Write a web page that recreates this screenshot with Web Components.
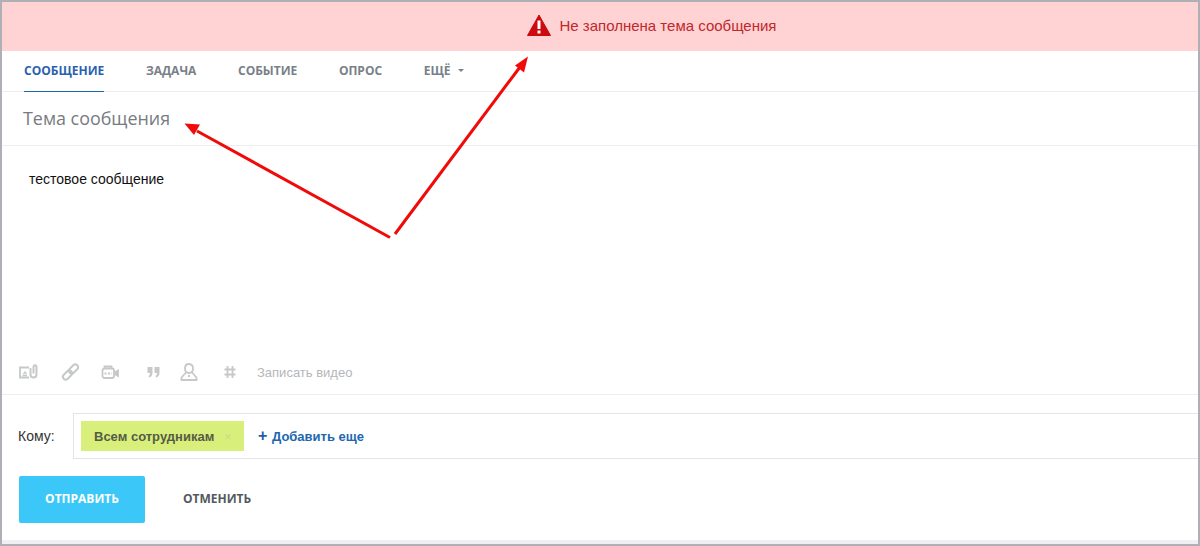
<!DOCTYPE html>
<html lang="ru">
<head>
<meta charset="utf-8">
<title>Сообщение</title>
<style>
  html, body { margin: 0; height: 100%; background: #fff; }
  body { font-family: "Liberation Sans", Arial, sans-serif; overflow: hidden; }
</style>
</head>
<body>
<post-form>
  <alert-banner>Не заполнена тема сообщения</alert-banner>
  <tab-bar></tab-bar>
  <subject-line>Тема сообщения</subject-line>
  <message-body>тестовое сообщение</message-body>
  <editor-tools></editor-tools>
  <recipient-row></recipient-row>
  <form-actions></form-actions>
</post-form>

<script>
class PostForm extends HTMLElement {
  constructor() {
    super();
    this.attachShadow({ mode: 'open' });
    this.shadowRoot.innerHTML = `
      <style>
        :host {
          display: flex;
          flex-direction: column;
          position: relative;
          box-sizing: border-box;
          width: 1200px;
          height: 546px;
          border: 2px solid #aeb0b5;
          background: #fff;
          overflow: hidden;
        }
        .strip {
          margin-top: auto;
          height: 4px;
          background: #eef0f3;
        }
        svg {
          position: absolute;
          left: -2px;
          top: -2px;
          pointer-events: none;
        }
      </style>
      <slot></slot>
      <div class="strip"></div>
      <svg width="1200" height="546" viewBox="0 0 1200 546" fill="#f00a0a">
        <path d="M390 237.500L197 131" stroke="#f00a0a" stroke-width="3" fill="none"/>
        <path d="M184.500 123.500L200 124.500L194 135Z"/>
        <path d="M395 234L520 67" stroke="#f00a0a" stroke-width="3" fill="none"/>
        <path d="M528 56.500L524 72.500L515 65.500Z"/>
      </svg>
    `;
  }
}

class AlertBanner extends HTMLElement {
  constructor() {
    super();
    this.attachShadow({ mode: 'open' });
    this.shadowRoot.innerHTML = `
      <style>
        :host {
          display: flex;
          align-items: center;
          justify-content: center;
          gap: 9px;
          height: 49px;
          flex: none;
          box-sizing: border-box;
          padding: 0 0 2px 103px;
          background: #ffd2d3;
          color: #c0282c;
          font: 15px "Liberation Sans", Arial, sans-serif;
        }
        svg { display: block; margin-top: -1px; }
      </style>
      <svg width="24" height="22" viewBox="0 0 24 22">
        <path d="M12 1L23.500 21.500H.5Z" fill="#cc0a0f" stroke="#cc0a0f" stroke-linejoin="round"/>
        <rect x="10.500" y="6.500" width="3" height="8.500" fill="#fff"/>
        <rect x="10.500" y="16.500" width="3" height="3" fill="#fff"/>
      </svg>
      <span><slot></slot></span>
    `;
  }
}

class TabBar extends HTMLElement {
  constructor() {
    super();
    this.attachShadow({ mode: 'open' });
    const tabs = ['Сообщение', 'Задача', 'Событие', 'Опрос'];
    this.shadowRoot.innerHTML = `
      <style>
        :host {
          display: flex;
          flex: none;
          gap: 41.600px;
          height: 41px;
          box-sizing: border-box;
          padding-left: 22px;
          border-bottom: 1px solid #edeef0;
          font: 700 12px "Open Sans", sans-serif;
          color: #7a8088;
          text-transform: uppercase;
        }
        div {
          display: flex;
          align-items: center;
          height: 41px;
          box-sizing: border-box;
          padding-bottom: 2px;
        }
        .active {
          color: #2b5fb0;
          border-bottom: 1px solid #2067b0;
        }
        .caret {
          width: 0;
          height: 0;
          margin-left: 7px;
          border: 3px solid transparent;
          border-top: 3px solid #7a8088;
          border-bottom: 0;
        }
      </style>
      ${tabs.map((t, i) => `<div class="${i === 0 ? 'active' : ''}">${t}</div>`).join('')}
      <div>Ещё<span class="caret"></span></div>
    `;
  }
}

class SubjectLine extends HTMLElement {
  constructor() {
    super();
    this.attachShadow({ mode: 'open' });
    this.shadowRoot.innerHTML = `
      <style>
        :host {
          display: flex;
          align-items: center;
          flex: none;
          height: 54px;
          box-sizing: border-box;
          padding: 0 0 2px 21px;
          border-bottom: 1px solid #edeef0;
          font: 17.900px "Open Sans", sans-serif;
          color: #767b80;
        }
      </style>
      <slot></slot>
    `;
  }
}

class MessageBody extends HTMLElement {
  constructor() {
    super();
    this.attachShadow({ mode: 'open' });
    this.shadowRoot.innerHTML = `
      <style>
        :host {
          display: block;
          flex: none;
          height: 205px;
          box-sizing: border-box;
          padding: 25px 0 0 27px;
          font: 14px/16px "Liberation Sans", Arial, sans-serif;
          color: #111;
        }
      </style>
      <slot></slot>
    `;
  }
}

class EditorTools extends HTMLElement {
  constructor() {
    super();
    this.attachShadow({ mode: 'open' });
    this.shadowRoot.innerHTML = `
      <style>
        :host {
          display: flex;
          align-items: center;
          flex: none;
          height: 44px;
          box-sizing: border-box;
          padding: 0 0 1px 17px;
          border-bottom: 1px solid #edeef0;
          font: 13px "Liberation Sans", Arial, sans-serif;
          color: #b4b7ba;
        }
        svg { display: block; flex: none; }
      </style>
      <svg width="20" height="18" viewBox="0 0 20 18" fill="none" stroke="#c6c8ca" stroke-width="1.800">
        <path d="M10 4.500H1V14.500H10"/>
        <path d="M3.500 12.500H8" stroke-width="1.500"/>
        <path d="M4.500 11L6 9L7.500 11" stroke-width="1.300"/>
        <path d="M11.500 5V11.500C11.500 15.500 17.500 15.500 17.500 11.500V4.500C17.500 1.500 14.500 1.500 14.500 4.500V10.500" stroke-width="2"/>
      </svg>
      <svg style="margin-left:22px" width="18" height="18" viewBox="0 0 18 18" fill="none" stroke="#c6c8ca" stroke-width="2">
        <g transform="rotate(-45 9.500 9)">
          <rect x="0" y="6.200" width="10.500" height="5.600" rx="2.800"/>
          <rect x="8.500" y="6.200" width="10.500" height="5.600" rx="2.800"/>
        </g>
      </svg>
      <svg style="margin-left:22px" width="20" height="18" viewBox="0 0 20 18" fill="none" stroke="#c6c8ca" stroke-width="1.800">
        <rect x="1.500" y="5.500" width="11.500" height="9.500" rx="2"/>
        <path d="M3.500 5V3.500H10.500V5"/>
        <path d="M14.500 9L17 7.500V13L14.500 11.500Z" fill="#c6c8ca"/>
        <path d="M3.500 10.500H11" stroke-dasharray="2 1.500"/>
      </svg>
      <svg style="margin-left:25px" width="16" height="18" viewBox="0 0 16 18" fill="#c6c8ca">
        <path d="M1.500 4H6.500V10C6.500 12.500 5 14 3 14.500L2.500 13C3.500 12.500 4 11.500 4 10H1.500Z"/>
        <path d="M8.500 4H13.500V10C13.500 12.500 12 14 10 14.500L9.500 13C10.500 12.500 11 11.500 11 10H8.500Z"/>
      </svg>
      <svg style="margin-left:18px" width="18" height="20" viewBox="0 0 18 20" fill="none" stroke="#c6c8ca" stroke-width="1.800">
        <path d="M9 2C6 2 5 4.200 5 6.500C5 9 6.500 11 9 11C11.500 11 13 9 13 6.500C13 4.200 12 2 9 2Z"/>
        <path d="M6 10.500L1.500 15.500V18H16.500V15.500L12 10.500"/>
        <path d="M9 13V15" stroke-width="2"/>
      </svg>
      <svg style="margin-left:25px" width="14" height="18" viewBox="0 0 14 18" fill="none" stroke="#c6c8ca" stroke-width="1.800">
        <path d="M4.500 3V15M9.500 3V15M1.500 6.500H12.500M1.500 11.500H12.500"/>
      </svg>
      <span style="margin-left:20px">Записать видео</span>
    `;
  }
}

class RecipientRow extends HTMLElement {
  constructor() {
    super();
    this.attachShadow({ mode: 'open' });
    this.shadowRoot.innerHTML = `
      <style>
        :host {
          display: flex;
          align-items: center;
          flex: none;
          margin-top: 18px;
          padding-left: 16px;
          font: 13px "Liberation Sans", Arial, sans-serif;
          color: #333;
        }
        .label { width: 55px; flex: none; font-size: 14px; }
        .box {
          display: flex;
          align-items: center;
          flex: 1;
          height: 46px;
          box-sizing: border-box;
          padding-left: 7px;
          border: 1px solid #e4e5e7;
          border-right: 0;
        }
        .chip {
          display: flex;
          align-items: center;
          width: 163px;
          height: 30px;
          box-sizing: border-box;
          padding-left: 13px;
          background: #d9ef7c;
          color: #545c45;
          font-weight: 700;
        }
        .chip i {
          margin-left: 10px;
          font: 13px "Liberation Sans", sans-serif;
          color: #c9dd82;
        }
        .add {
          margin-left: 14px;
          color: #2067b0;
          font-weight: 700;
        }
        .add b { margin-right: 1px; font-size: 16px; line-height: 13px; color: #1f5ea8; }
      </style>
      <span class="label">Кому:</span>
      <div class="box">
        <div class="chip">Всем сотрудникам<i>×</i></div>
        <span class="add"><b>+</b> Добавить еще</span>
      </div>
    `;
  }
}

class FormActions extends HTMLElement {
  constructor() {
    super();
    this.attachShadow({ mode: 'open' });
    this.shadowRoot.innerHTML = `
      <style>
        :host {
          display: flex;
          align-items: center;
          flex: none;
          margin-top: 17px;
          padding-left: 17px;
          gap: 38px;
          font: 700 12px "Open Sans", sans-serif;
        }
        button {
          width: 126px;
          height: 47px;
          padding: 0 0 2px;
          border: 0;
          border-radius: 2px;
          background: #3bc8f8;
          color: #fff;
          font: inherit;
        }
        span { padding-bottom: 2px; color: #545960; }
      </style>
      <button>ОТПРАВИТЬ</button>
      <span>ОТМЕНИТЬ</span>
    `;
  }
}

customElements.define('post-form', PostForm);
customElements.define('alert-banner', AlertBanner);
customElements.define('tab-bar', TabBar);
customElements.define('subject-line', SubjectLine);
customElements.define('message-body', MessageBody);
customElements.define('editor-tools', EditorTools);
customElements.define('recipient-row', RecipientRow);
customElements.define('form-actions', FormActions);
</script>
</body>
</html>
